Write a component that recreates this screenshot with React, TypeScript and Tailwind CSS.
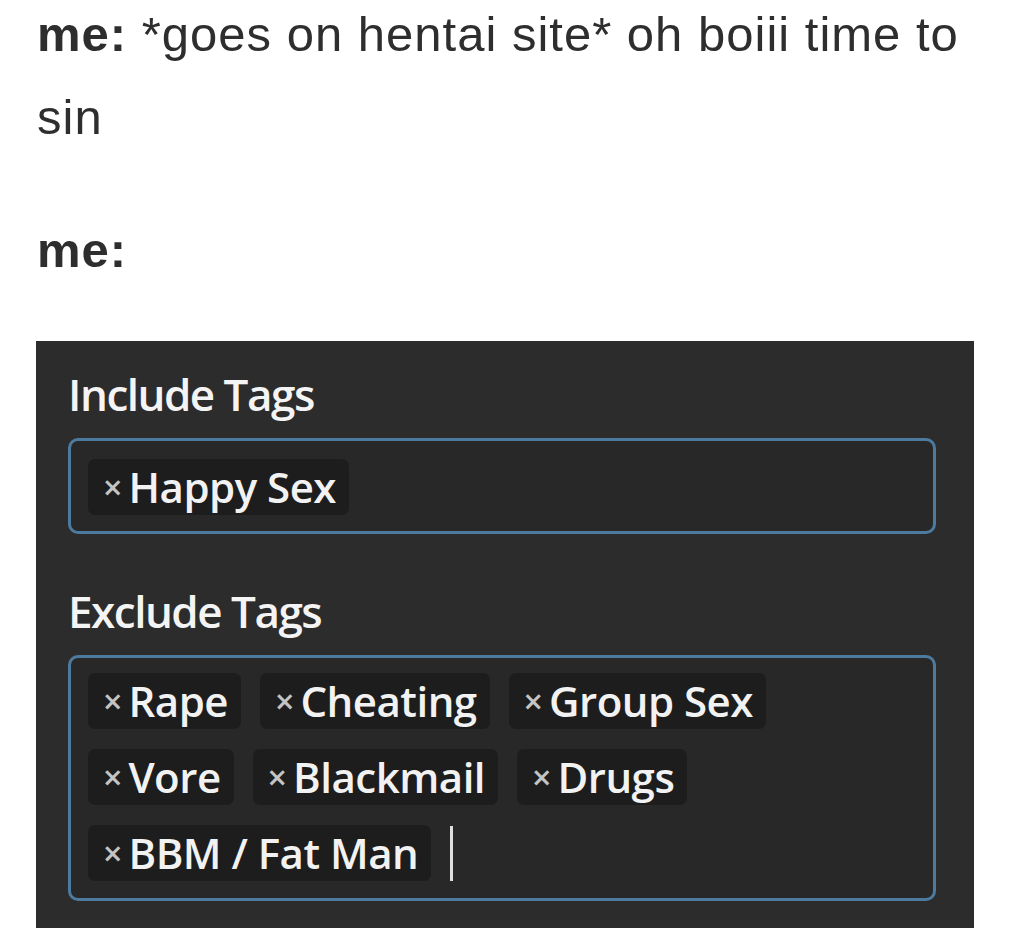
const includeTags = ["Happy Sex"];
const excludeTags = ["Rape", "Cheating", "Group Sex", "Vore", "Blackmail", "Drugs", "BBM / Fat Man"];

function Tag({ label }: { label: string }) {
  return (
    <div className="flex h-[56px] items-center rounded-[7px] bg-[#1d1d1d] pl-[15px] pr-[13px]">
      <span className="mr-[6px] text-[34px] leading-none font-semibold text-[#c4c4c4]">×</span>
      <span className="text-[42px] leading-none font-semibold tracking-[-0.5px] text-[#f2f2f2]">{label}</span>
    </div>
  );
}

export default function App() {
  return (
    <div className="h-[933px] w-[1012px] overflow-hidden bg-white">
      <div className="px-[37px] font-['Liberation_Sans',Arial,sans-serif] text-[49px] leading-[83px] tracking-[1px] text-[#2e2e2e]">
        <p className="-mt-[7px]">
          <span className="font-bold">me:</span> <span>*goes on hentai site* oh boiii time to</span>
          <br />
          <span>sin</span>
        </p>
        <p className="mt-[50px] font-bold">me:</p>
      </div>
      <div className="ml-[36px] mt-[49px] h-[587px] w-[938px] bg-[#2c2c2c] pl-[32px] pr-[38px] pt-[27px] font-['Open_Sans','Noto_Sans',sans-serif]">
        <h2 className="text-[44px] leading-[52px] font-semibold tracking-[-1.5px] text-[#f4f4f4]">Include Tags</h2>
        <div className="mt-[18px] flex h-[96px] items-start rounded-[10px] border-[3px] border-[#4c7b9f] bg-[#282828] px-[17px] pt-[18px]">
          {includeTags.map((t) => (
            <Tag key={t} label={t} />
          ))}
        </div>
        <h2 className="mt-[51px] text-[44px] leading-[52px] font-semibold tracking-[-1.5px] text-[#f4f4f4]">Exclude Tags</h2>
        <div className="mt-[18px] flex h-[246px] flex-wrap content-start items-center gap-x-[19px] gap-y-[20px] rounded-[10px] border-[3px] border-[#4c7b9f] bg-[#282828] px-[17px] pt-[15px]">
          {excludeTags.map((t) => (
            <Tag key={t} label={t} />
          ))}
          <span className="h-[55px] w-[3px] bg-[#dedede]" />
        </div>
      </div>
    </div>
  );
}
